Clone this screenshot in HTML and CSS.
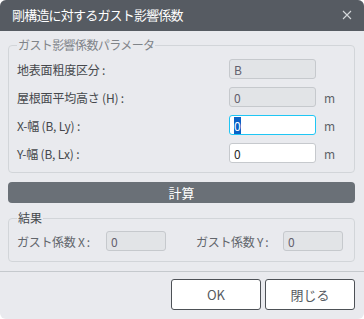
FILE: index.html
```html
<!DOCTYPE html>
<html lang="ja">
  <head>
    <meta charset="UTF-8" />
    <meta name="viewport" content="width=device-width, initial-scale=1.0" />
    <title>剛構造に対するガスト影響係数</title>
    <link rel="stylesheet" href="styles.css">
  </head>
  <body>
    <div class="dialog">
      <div class="dialog-header">
        <h1 class="dialog-title">剛構造に対するガスト影響係数</h1>
        <button class="close-btn" aria-label="閉じる">
          <svg width="10" height="10" viewBox="0 0 10 10">
            <path d="M1 1 L9 9 M9 1 L1 9" stroke="#d4d7da" stroke-width="1.1" fill="none" />
          </svg>
        </button>
      </div>

      <div class="dialog-body">
        <fieldset class="group">
          <legend class="group-title">ガスト影響係数パラメータ</legend>
          <div class="param-grid">
            <label class="param-label">地表面粗度区分 :</label>
            <input class="field" type="text" value="B" disabled>
            <span class="unit"></span>

            <label class="param-label">屋根面平均高さ (H) :</label>
            <input class="field" type="text" value="0" disabled>
            <span class="unit">m</span>

            <label class="param-label">X-幅 (B, Ly) :</label>
            <input class="field" id="widthX" type="text" value="0">
            <span class="unit">m</span>

            <label class="param-label">Y-幅 (B, Lx) :</label>
            <input class="field" type="text" value="0">
            <span class="unit">m</span>
          </div>
        </fieldset>

        <button class="calc-btn">計算</button>

        <fieldset class="group result">
          <legend class="group-title">結果</legend>
          <div class="result-grid">
            <label class="result-label">ガスト係数 X :</label>
            <input class="field" type="text" value="0" disabled>
            <span></span>
            <label class="result-label">ガスト係数 Y :</label>
            <input class="field" type="text" value="0" disabled>
          </div>
        </fieldset>
      </div>

      <div class="dialog-footer">
        <button class="btn">OK</button>
        <button class="btn">閉じる</button>
      </div>
    </div>

    <script src="script.js"></script>
  </body>
</html>
```

FILE: styles.css
```css
* {
  margin: 0;
  padding: 0;
  box-sizing: border-box;
}

body {
  font-family: 'Noto Sans CJK JP', 'Noto Sans', sans-serif;
  background: #ffffff;
  width: 364px;
  height: 319px;
  overflow: hidden;
}

.dialog {
  width: 364px;
  height: 319px;
  background: #e9eaee;
  border-radius: 6px;
  overflow: hidden;
  display: flex;
  flex-direction: column;
}

.dialog-header {
  height: 31px;
  background: #565b62;
  display: flex;
  align-items: center;
  justify-content: space-between;
  padding: 0 11px 2px 12px;
}

.dialog-title {
  font-size: 13px;
  font-weight: 400;
  color: #ffffff;
  letter-spacing: -0.8px;
}

.close-btn {
  background: none;
  border: none;
  width: 10px;
  height: 10px;
  display: flex;
  margin-right: 1px;
}

.dialog-body {
  flex: 1;
  padding: 6px 9px 0 8px;
}

/* fieldsets */
.group {
  border: 1px solid #d2d5d9;
  border-radius: 4px;
  padding: 6px 8px 9px 8px;
  min-inline-size: 0;
}

.group-title {
  font-size: 12px;
  line-height: 16px;
  color: #808489;
  padding: 0 1px;
  letter-spacing: -0.6px;
}

.result .group-title {
  color: #45484c;
  letter-spacing: 0;
}

.param-grid {
  display: grid;
  grid-template-columns: 1fr 87px 30px;
  row-gap: 8px;
  align-items: center;
}

.param-label {
  font-size: 12px;
  color: #45484c;
  letter-spacing: -0.2px;
}

.unit {
  font-size: 12px;
  color: #5e6369;
  padding-left: 8px;
}

.field {
  height: 20px;
  width: 100%;
  border: 1px solid #c6c9cd;
  border-radius: 3px;
  background: #ffffff;
  padding: 0 4px;
  font-family: inherit;
  font-size: 12px;
  color: #2a2a2a;
  outline: none;
  caret-color: #e8801e;
}

.field:disabled {
  background: #e2e4e7;
  color: #62606e;
}

.field:focus {
  border-color: #1fc6f4;
}

.field::selection {
  background: #0b62c6;
  color: #ffffff;
}

.calc-btn {
  display: block;
  width: 100%;
  height: 21px;
  margin: 9px 0 7px;
  background: #6a7077;
  border: none;
  border-radius: 4px;
  font-family: inherit;
  font-size: 13px;
  color: #ffffff;
}

.result {
  padding: 5px 8px 10px 8px;
}

.result-grid {
  display: grid;
  grid-template-columns: 89px 60px 30px 87px 60px;
  align-items: center;
}

.result-label {
  font-size: 12px;
  color: #62666c;
  letter-spacing: -0.3px;
}

/* footer */
.dialog-footer {
  height: 48px;
  border-top: 1px solid #c5c9cd;
  display: flex;
  justify-content: flex-end;
  gap: 4px;
  padding: 7px 9px 0 0;
}

.btn {
  width: 90px;
  height: 31px;
  background: #ffffff;
  border: 1px solid #4d5156;
  border-radius: 3px;
  font-family: inherit;
  font-size: 13px;
  color: #555a60;
}
```

FILE: script.js
```js
// focus the X width field with its value selected
const widthX = document.getElementById('widthX');
widthX.focus();
widthX.select();
```
